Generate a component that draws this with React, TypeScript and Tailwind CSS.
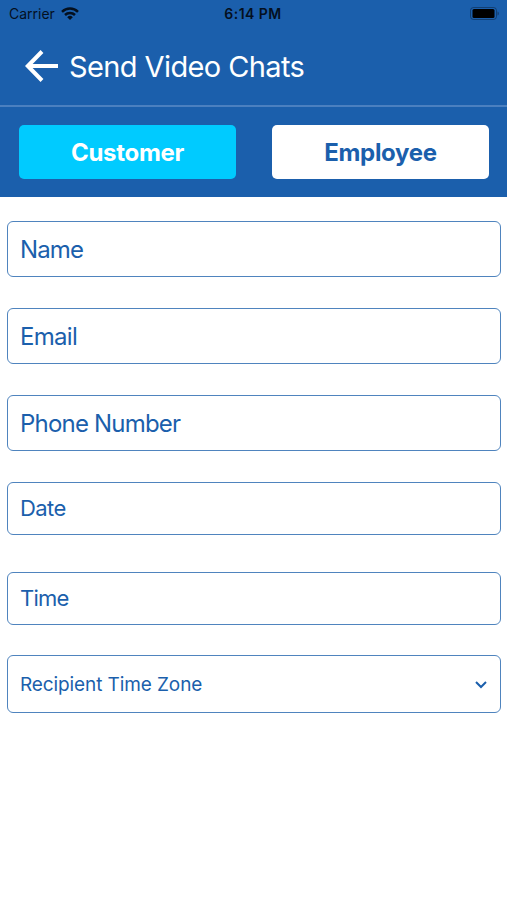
import { useState } from 'react';

const recipients = ['Customer', 'Employee'];

const fields = [
  { label: 'Name', className: 'h-[56px] text-[24px] tracking-[-0.9px]' },
  { label: 'Email', className: 'mt-[31px] h-[56px] text-[24px] tracking-[-0.7px]' },
  { label: 'Phone Number', className: 'mt-[31px] h-[56px] text-[24px] tracking-[-0.8px]' },
  { label: 'Date', className: 'mt-[31px] h-[53px] pb-[2px] text-[22px] tracking-[-0.6px]' },
  { label: 'Time', className: 'mt-[37px] h-[53px] pb-[1px] text-[22px] tracking-[-0.8px]' },
];

function StatusBar() {
  return (
    <div className="grid h-7 grid-cols-3 items-center pr-[8px] pl-[9px] text-[14px] leading-none text-[#04101f]">
      <div className="flex items-center gap-[6px]">
        <span>Carrier</span>
        <svg className="mb-[2px]" width="18" height="13" viewBox="0 0 18 13" fill="none" stroke="currentColor" strokeWidth="2.5">
          <path d="M1 4.800a11.500 11.500 0 0 1 16 0" />
          <path d="M4 8a7.200 7.200 0 0 1 10 0" />
          <path d="M9 13 6.200 10.200a4 4 0 0 1 5.600 0Z" fill="currentColor" stroke="none" />
        </svg>
      </div>
      <span className="pr-[2px] text-center font-semibold tracking-[0.45px]">6:14 PM</span>
      <svg className="mb-[2px] justify-self-end" width="29" height="13" viewBox="0 0 29 13" fill="none">
        <rect x=".5" y=".5" width="26" height="12" rx="3" stroke="currentColor" strokeOpacity=".4" />
        <rect x="2.500" y="2" width="22" height="9" rx="1.500" fill="black" />
        <path d="M27.500 4.500c1.800 .5 1.800 3.500 0 4Z" fill="currentColor" fillOpacity=".4" />
      </svg>
    </div>
  );
}

export default function App() {
  const [active, setActive] = useState('Customer');

  return (
    <div className="min-h-screen bg-white font-['Inter',sans-serif] text-[#1b5fac]">
      <header className="h-[197px] bg-[#1b5fac]">
        <StatusBar />
        <div className="flex h-[79px] items-center border-b-2 border-[#4b80c0] pl-[25px] text-white">
          <svg className="-mt-px" width="33" height="32" viewBox="0 0 33 32" fill="none" stroke="currentColor" strokeWidth="4">
            <path d="M17 1.500 2.800 16 17 30.500M3 16h30" />
          </svg>
          <h1 className="mt-px ml-[11px] text-[29px] tracking-[-0.6px]">Send Video Chats</h1>
        </div>
        <div className="flex justify-between pt-[18px] pr-[18px] pl-[19px]">
          {recipients.map((name) => (
            <button
              key={name}
              onClick={() => setActive(name)}
              className={`h-[54px] w-[217px] rounded-[5px] pt-[2px] text-[24px] font-bold tracking-[-0.3px] ${
                active === name ? 'bg-[#00cbff] text-white' : 'bg-white text-[#1b5fac]'
              }`}
            >
              {name}
            </button>
          ))}
        </div>
      </header>

      <form className="flex flex-col pt-6 pr-[6px] pl-[7px]">
        {fields.map((field) => (
          <input
            key={field.label}
            placeholder={field.label}
            className={`w-full rounded-[6px] border-[1.5px] border-[#4f84be] px-[12px] placeholder:text-[#1b5fac] ${field.className}`}
          />
        ))}
        <button
          type="button"
          className="mt-[30px] flex h-[58px] w-full items-center justify-between rounded-[6px] border-[1.5px] border-[#4f84be] pt-[2px] pr-[13px] pl-[12px] text-[19px] tracking-[-0.1px]"
        >
          <span>Recipient Time Zone</span>
          <svg width="12" height="8" viewBox="0 0 12 8" fill="none" stroke="currentColor" strokeWidth="2">
            <path d="m1 1 5 5 5-5" />
          </svg>
        </button>
      </form>
    </div>
  );
}
